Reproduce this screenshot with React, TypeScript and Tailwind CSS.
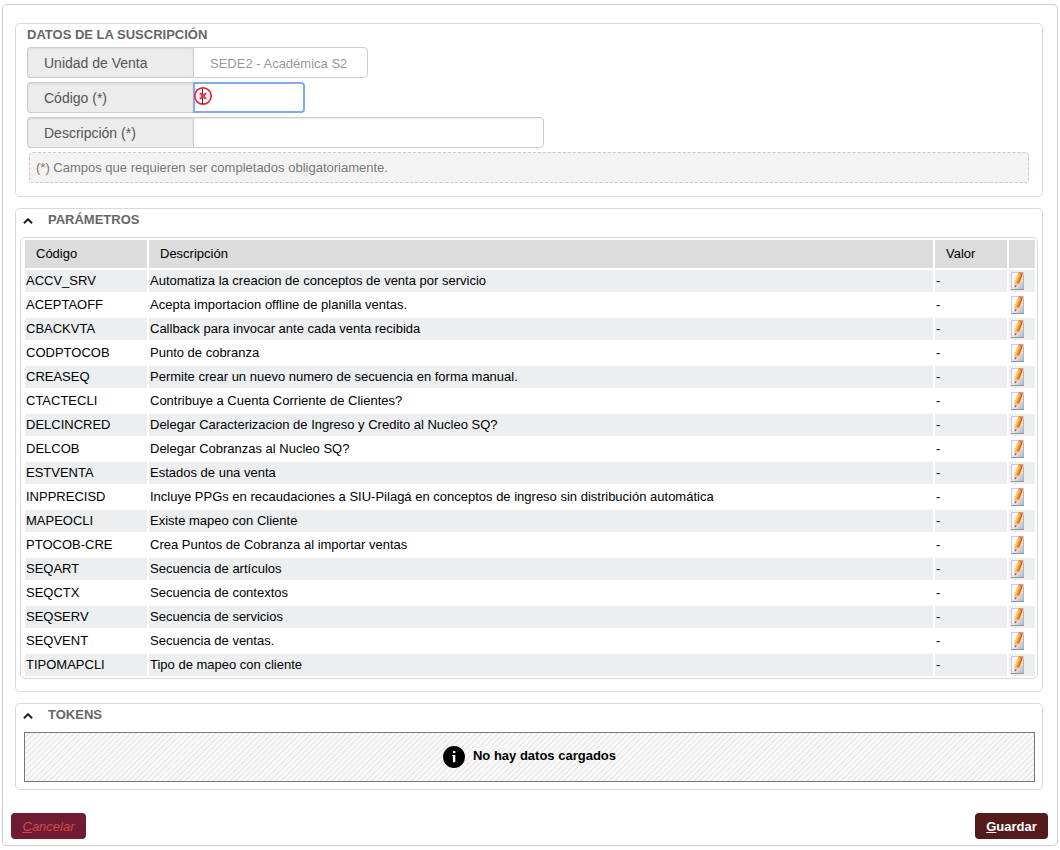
import type { ReactNode } from "react";

type Param = { code: string; description: string };

const params: Param[] = [
  { code: "ACCV_SRV", description: "Automatiza la creacion de conceptos de venta por servicio" },
  { code: "ACEPTAOFF", description: "Acepta importacion offline de planilla ventas." },
  { code: "CBACKVTA", description: "Callback para invocar ante cada venta recibida" },
  { code: "CODPTOCOB", description: "Punto de cobranza" },
  { code: "CREASEQ", description: "Permite crear un nuevo numero de secuencia en forma manual." },
  { code: "CTACTECLI", description: "Contribuye a Cuenta Corriente de Clientes?" },
  { code: "DELCINCRED", description: "Delegar Caracterizacion de Ingreso y Credito al Nucleo SQ?" },
  { code: "DELCOB", description: "Delegar Cobranzas al Nucleo SQ?" },
  { code: "ESTVENTA", description: "Estados de una venta" },
  {
    code: "INPPRECISD",
    description: "Incluye PPGs en recaudaciones a SIU-Pilagá en conceptos de ingreso sin distribución automática",
  },
  { code: "MAPEOCLI", description: "Existe mapeo con Cliente" },
  { code: "PTOCOB-CRE", description: "Crea Puntos de Cobranza al importar ventas" },
  { code: "SEQART", description: "Secuencia de artículos" },
  { code: "SEQCTX", description: "Secuencia de contextos" },
  { code: "SEQSERV", description: "Secuencia de servicios" },
  { code: "SEQVENT", description: "Secuencia de ventas." },
  { code: "TIPOMAPCLI", description: "Tipo de mapeo con cliente" },
];

function EditIcon() {
  return (
    <svg viewBox="0 0 16 18" className="block h-[18px] w-4" aria-hidden="true">
      <defs>
        <linearGradient id="sheet" x1="0" y1="0" x2="1" y2="1">
          <stop offset="0" stopColor="#ffffff" />
          <stop offset="0.5" stopColor="#f1f2f8" />
          <stop offset="1" stopColor="#a9afbf" />
        </linearGradient>
      </defs>
      <rect x="1.5" y="0.5" width="12" height="17" fill="url(#sheet)" stroke="#c8ccda" />
      <path d="M1 17.5H14" stroke="#8c90a0" />
      <path d="M13.5 4V17" stroke="#a3a9b8" strokeDasharray="1.5 1" />
      <path d="M8.3 1.4 12.8 2.4 9 11.8 5 15.4 4.6 10.6Z" fill="#f99a1c" />
      <path d="M8.3 1.4 9.9 1.8 6.1 11 4.6 10.6Z" fill="#ffcb55" />
      <path d="M11.4 2.1 12.8 2.4 9 11.8 7.6 11.4Z" fill="#e6650d" />
      <path d="M8.3 1.4 9 0.3 12.6 0.6 12.8 2.4Z" fill="#e8703a" />
      <path d="M4.6 10.6 9 11.8 5 15.4Z" fill="#e7c5a0" />
      <path d="M4.8 13.4 6.6 14 4.9 15.6Z" fill="#703a35" />
    </svg>
  );
}

function RequiredIcon() {
  return (
    <svg viewBox="0 0 20 20" className="pointer-events-none absolute top-1 left-0 size-5" aria-hidden="true">
      <circle cx="10" cy="10" r="8.2" fill="#fff" stroke="#ee2038" strokeWidth="1.7" />
      <path d="M9.5 3v15" stroke="#333" />
      <path d="m7 7 6 6M13 7l-6 6" stroke="#ee2038" strokeWidth="2.4" strokeOpacity="0.9" />
    </svg>
  );
}

function Section({ title, children }: { title: string; children: ReactNode }) {
  return (
    <section className="rounded-[5px] border border-[#d9d9d9]">
      <h2 className="flex h-7 items-start text-[13px] leading-5 font-bold text-[#666]">
        <button type="button" aria-label={"Contraer " + title} className="flex h-6 w-8 items-center pl-[7px]">
          <svg viewBox="0 0 10 6" className="h-1.5 w-2.5" aria-hidden="true">
            <path d="m0.9 5.2 4.1-4 4.1 4" fill="none" stroke="#222" strokeWidth="2" />
          </svg>
        </button>
        <span className="pt-px">{title}</span>
      </h2>
      {children}
    </section>
  );
}

function Field({ id, label, children }: { id: string; label: string; children: ReactNode }) {
  return (
    <div className="flex h-[31px]">
      <label
        htmlFor={id}
        className="flex w-[166px] shrink-0 items-center rounded-l border border-r-0 border-[#ccc] bg-[#ececec] pt-0.5 pl-4 text-[14px] text-[#555] shadow-[inset_0_1px_2px_rgba(0,0,0,0.08)]"
      >
        {label}
      </label>
      {children}
    </div>
  );
}

export default function App() {
  return (
    <main className="px-0.5 pt-1 pb-1 font-['Liberation_Sans',Arial,sans-serif] text-[13px] text-black">
      <div className="rounded-[5px] border border-[#ccc] px-2 pt-[18px] pb-1.5">
        <div className="flex flex-col gap-[11px] pr-1.5 pl-1">
          <section className="rounded-[5px] border border-[#d9d9d9] px-[11px] pt-px pb-[13px]">
            <h2 className="mb-0.5 text-[13px] leading-5 font-bold text-[#666]">DATOS DE LA SUSCRIPCIÓN</h2>
            <div className="flex flex-col gap-1">
              <Field id="unidad" label="Unidad de Venta">
                <input
                  id="unidad"
                  readOnly
                  defaultValue="SEDE2 - Académica S2"
                  className="w-[175px] rounded-r border border-[#ccc] pt-0.5 pl-4 text-[13px] text-[#999] outline-none"
                />
              </Field>
              <Field id="codigo" label="Código (*)">
                <div className="relative flex">
                  <input
                    id="codigo"
                    required
                    className="w-28 rounded-r-sm border-2 border-[#84aaea] px-1 outline-none"
                  />
                  <RequiredIcon />
                </div>
              </Field>
              <Field id="descripcion" label="Descripción (*)">
                <input
                  id="descripcion"
                  required
                  className="w-[351px] rounded-r border border-[#ccc] px-1 shadow-[inset_0_1px_1px_rgba(0,0,0,0.08)] outline-none"
                />
              </Field>
            </div>
            <p className="mx-0.5 mt-1 rounded border border-dashed border-[#e5bcbf] bg-[#f3f3f3] px-1.5 pt-[5px] pb-1 leading-5 text-[#777]">
              (*) Campos que requieren ser completados obligatoriamente.
            </p>
          </section>

          <Section title="PARÁMETROS">
            <div className="mx-1 mb-3 rounded-[5px] border border-[#d9d9d9] pl-0.5">
              <table className="w-full table-fixed border-separate border-spacing-0.5 leading-4">
                <colgroup>
                  <col className="w-[122px]" />
                  <col />
                  <col className="w-[72px]" />
                  <col className="w-[26px]" />
                </colgroup>
                <thead>
                  <tr className="h-7 bg-[#dcdcdc] text-left">
                    <th className="px-[11px] py-0 font-normal">Código</th>
                    <th className="px-[11px] py-0 font-normal">Descripción</th>
                    <th className="px-[11px] py-0 font-normal">Valor</th>
                    <th className="p-0" aria-label="Editar" />
                  </tr>
                </thead>
                <tbody>
                  {params.map((param) => (
                    <tr key={param.code} className="h-[22px] odd:bg-[#eceef0]">
                      <td className="px-px py-0">{param.code}</td>
                      <td className="px-px py-0">{param.description}</td>
                      <td className="px-px py-0">-</td>
                      <td className="px-px py-0">
                        <button type="button" aria-label={"Editar " + param.code} className="block">
                          <EditIcon />
                        </button>
                      </td>
                    </tr>
                  ))}
                </tbody>
              </table>
            </div>
          </Section>

          <Section title="TOKENS">
            <div className="mr-[7px] mb-[7px] ml-2 flex h-[50px] items-center justify-center gap-2 border border-[#777] bg-[repeating-linear-gradient(135deg,#f9f9f9_0px,#f9f9f9_2px,#e4e4e4_3px,#f9f9f9_4px)] font-bold">
              <svg viewBox="0 0 22 22" className="size-[22px]" aria-hidden="true">
                <circle cx="11" cy="11" r="11" fill="#000" />
                <path d="M10 5h2.3v2H10ZM9.2 9h3.1v7.3H10v-6H9.2Z" fill="#fff" />
              </svg>
              <span className="-mt-0.5">No hay datos cargados</span>
            </div>
          </Section>
        </div>

        <footer className="mt-[23px] flex justify-between pr-px">
          <button type="button" className="h-[26px] w-[75px] rounded bg-[#711b32] pt-0.5 text-[#cc4b4b] italic">
            <u>C</u>ancelar
          </button>
          <button type="button" className="h-[26px] w-[73px] rounded bg-[#541b1b] pt-0.5 font-bold text-white">
            <u>G</u>uardar
          </button>
        </footer>
      </div>
    </main>
  );
}
